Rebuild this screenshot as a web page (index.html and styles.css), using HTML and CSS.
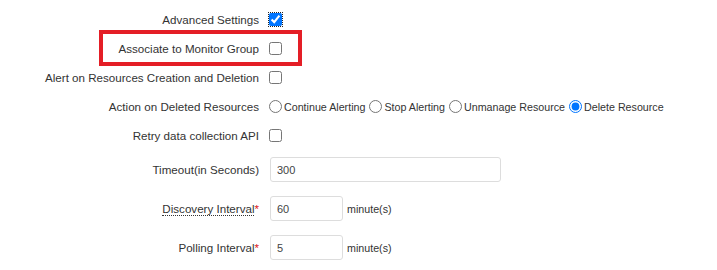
FILE: index.html
```html
<!DOCTYPE html>
<html lang="en">
<head>
    <meta charset="UTF-8">
    <title>Advanced Settings</title>
    <link rel="stylesheet" href="styles.css">
</head>
<body>
    <form class="settings-form">
        <div class="form-row check-row">
            <label class="field-label" for="advanced">Advanced Settings</label>
            <div class="field-control">
                <input type="checkbox" id="advanced" class="focused" checked>
            </div>
        </div>

        <div class="form-row check-row">
            <label class="field-label" for="monitorGroup">Associate to Monitor Group</label>
            <div class="field-control">
                <input type="checkbox" id="monitorGroup">
            </div>
        </div>

        <div class="form-row check-row">
            <label class="field-label" for="alertResources">Alert on Resources Creation and Deletion</label>
            <div class="field-control">
                <input type="checkbox" id="alertResources">
            </div>
        </div>

        <div class="form-row check-row">
            <span class="field-label">Action on Deleted Resources</span>
            <div class="field-control radio-group">
                <label class="radio-option"><input type="radio" name="deleteAction"> Continue Alerting</label>
                <label class="radio-option"><input type="radio" name="deleteAction"> Stop Alerting</label>
                <label class="radio-option"><input type="radio" name="deleteAction"> Unmanage Resource</label>
                <label class="radio-option"><input type="radio" name="deleteAction" checked> Delete Resource</label>
            </div>
        </div>

        <div class="form-row check-row">
            <label class="field-label" for="retryApi">Retry data collection API</label>
            <div class="field-control">
                <input type="checkbox" id="retryApi">
            </div>
        </div>

        <div class="form-row input-row">
            <label class="field-label" for="timeout">Timeout(in Seconds)</label>
            <div class="field-control">
                <input type="text" id="timeout" class="text-input wide" value="300">
            </div>
        </div>

        <div class="form-row input-row">
            <label class="field-label" for="discovery"><span class="hint">Discovery Interval</span><span class="required">*</span></label>
            <div class="field-control">
                <input type="text" id="discovery" class="text-input short" value="60">
                <span class="unit">minute(s)</span>
            </div>
        </div>

        <div class="form-row input-row">
            <label class="field-label" for="polling">Polling Interval<span class="required">*</span></label>
            <div class="field-control">
                <input type="text" id="polling" class="text-input short" value="5">
                <span class="unit">minute(s)</span>
            </div>
        </div>

        <!-- annotation box drawn over the monitor group row -->
        <div class="callout"></div>
    </form>
</body>
</html>
```

FILE: styles.css
```css
* {
    margin: 0;
    padding: 0;
    box-sizing: border-box;
}

body {
    background: #fff;
    color: #333;
    font-family: 'Liberation Sans', Arial, Helvetica, sans-serif;
    font-size: 11.6px;
}

.settings-form {
    position: relative;
    padding-top: 5px;
}

.form-row {
    display: grid;
    grid-template-columns: 259px 1fr;
    column-gap: 10px;
    align-items: center;
}

.check-row {
    height: 29px;
}

.input-row {
    height: 39px;
}

.field-label {
    text-align: right;
    white-space: nowrap;
}

.field-control {
    display: flex;
    align-items: center;
    font-size: 10.7px;
}

input[type="checkbox"],
input[type="radio"] {
    width: 13px;
    height: 13px;
    margin: 0;
}

.focused {
    outline: 1px dotted #222;
    outline-offset: 0;
}

.radio-group {
    gap: 4px;
}

.radio-option {
    display: flex;
    align-items: center;
    gap: 2px;
    white-space: nowrap;
}

.text-input {
    height: 25px;
    margin-left: 1px;
    padding: 0 6px;
    border: 1px solid #ddd;
    border-radius: 3px;
    font-family: inherit;
    font-size: 11px;
    color: #444;
    outline: none;
}

.wide {
    width: 231px;
}

.short {
    width: 73px;
}

.unit {
    margin-left: 4px;
}

.hint {
    border-bottom: 1px dotted #333;
}

.required {
    color: #e0201a;
}

.callout {
    position: absolute;
    left: 99px;
    top: 30px;
    width: 203px;
    height: 36px;
    border: 4px solid #e41e26;
}
```
